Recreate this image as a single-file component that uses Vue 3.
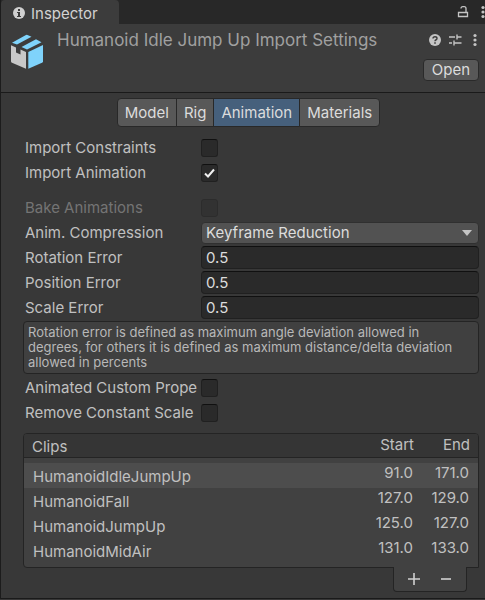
<script setup>
import { ref } from 'vue'

const tabs = ['Model', 'Rig', 'Animation', 'Materials']
const activeTab = ref('Animation')

const importConstraints = ref(false)
const importAnimation = ref(true)
const bakeAnimations = ref(false)
const compression = ref('Keyframe Reduction')
const errors = ref([
  { id: 'rotation-error', label: 'Rotation Error', value: '0.5' },
  { id: 'position-error', label: 'Position Error', value: '0.5' },
  { id: 'scale-error', label: 'Scale Error', value: '0.5' },
])
const animatedCustom = ref(false)
const removeScale = ref(false)

const clips = ref([
  { name: 'HumanoidIdleJumpUp', start: '91.0', end: '171.0' },
  { name: 'HumanoidFall', start: '127.0', end: '129.0' },
  { name: 'HumanoidJumpUp', start: '125.0', end: '127.0' },
  { name: 'HumanoidMidAir', start: '131.0', end: '133.0' },
])
const selected = ref(0)
</script>

<template>
  <main class="inspector">
    <div class="tabbar">
      <div class="window-tab">
        <svg class="info" viewBox="0 0 12 12" aria-hidden="true">
          <circle cx="6" cy="6" r="6" fill="#d0d0d0" />
          <path d="M5 2h2v2H5zM4 5h3v4h1v1H4V9h1V6H4z" fill="#3c3c3c" />
        </svg>
        <span>Inspector</span>
      </div>
      <div class="window-actions">
        <button class="icon-button" aria-label="Lock">
          <svg width="12" height="14" viewBox="0 0 12 14" fill="none" stroke="#c4c4c4">
            <path d="M1.500 7.500h9v4h-9zM9 7V3.500q0-1.800-1.800-1.800h-1.400Q4 1.700 4 3.500" stroke-width="1.300" />
          </svg>
        </button>
        <button class="icon-button" aria-label="Window menu">
          <svg width="4" height="14" viewBox="0 0 4 14" fill="#c4c4c4">
            <circle cx="2" cy="2.500" r="1.600" /><circle cx="2" cy="7" r="1.600" /><circle cx="2" cy="11.500" r="1.600" />
          </svg>
        </button>
      </div>
    </div>

    <header class="asset">
      <svg class="asset-icon" viewBox="0 0 34 36" aria-hidden="true">
        <path d="M1 11.200 6 13.500v5l4.500 2v-5L16 18v16.800L2 28.800Q1 28.300 1 27.300z" fill="#c8c8c8" />
        <path d="M18.300 18 33 11v16.300q0 1-1 1.500l-13.700 6z" fill="#7fd3fb" />
        <path d="M2 8.800 15.500 1.200q1-.6 2-.2L21.500 2.700 7 10.500zM11.500 13 26 5.200 31.500 8.300 17 15.500z" fill="#7fd3fb" />
      </svg>
      <h1>Humanoid Idle Jump Up Import Settings</h1>
      <div class="asset-side">
        <div class="asset-actions">
          <button class="icon-button" aria-label="Help">
            <svg width="12" height="12" viewBox="0 0 12 12">
              <circle cx="6" cy="6" r="6" fill="#c4c4c4" />
              <path d="M4 4.600Q4 2.800 6 2.800T8 4.500Q8 5.400 6.800 6 6 6.400 6 7.200" fill="none" stroke="#3c3c3c" stroke-width="1.400" />
              <path d="M5.200 8.300h1.600v1.500H5.200z" fill="#3c3c3c" />
            </svg>
          </button>
          <button class="icon-button" aria-label="Presets">
            <svg width="16" height="12" viewBox="0 0 16 12" fill="none" stroke="#c4c4c4" stroke-width="1.400">
              <path d="M0 3h6M8 3h4.500M8 .5v5M0 9h3M5 9h7.500M5 6.500v5" />
            </svg>
          </button>
          <button class="icon-button" aria-label="More">
            <svg width="4" height="14" viewBox="0 0 4 14" fill="#c4c4c4">
              <circle cx="2" cy="2.500" r="1.600" /><circle cx="2" cy="7" r="1.600" /><circle cx="2" cy="11.500" r="1.600" />
            </svg>
          </button>
        </div>
        <button class="open">Open</button>
      </div>
    </header>

    <section class="content">
      <nav class="tabs">
        <button
          v-for="tab in tabs"
          :key="tab"
          :class="{ active: tab === activeTab }"
          :aria-pressed="tab === activeTab"
          @click="activeTab = tab"
        >{{ tab }}</button>
      </nav>

      <div class="row">
        <label for="constraints">Import Constraints</label>
        <input id="constraints" v-model="importConstraints" type="checkbox" />
      </div>
      <div class="row">
        <label for="animation">Import Animation</label>
        <input id="animation" v-model="importAnimation" type="checkbox" />
      </div>
      <div class="row disabled">
        <label for="bake">Bake Animations</label>
        <input id="bake" v-model="bakeAnimations" type="checkbox" disabled />
      </div>
      <div class="row">
        <label for="compression">Anim. Compression</label>
        <div class="select">
          <select id="compression" v-model="compression">
            <option>Off</option>
            <option>Keyframe Reduction</option>
            <option>Optimal</option>
          </select>
          <svg class="arrow" viewBox="0 0 10 6" aria-hidden="true"><path d="M0 0h10L5 6z" fill="#c4c4c4" /></svg>
        </div>
      </div>
      <div v-for="field in errors" :key="field.id" class="row">
        <label :for="field.id">{{ field.label }}</label>
        <input :id="field.id" v-model="field.value" type="text" />
      </div>

      <p class="help">
        Rotation error is defined as maximum angle deviation allowed in degrees, for others it is defined as maximum distance/delta deviation allowed in percents
      </p>

      <div class="row">
        <label for="custom">Animated Custom Prope</label>
        <input id="custom" v-model="animatedCustom" type="checkbox" />
      </div>
      <div class="row">
        <label for="scale-curves">Remove Constant Scale</label>
        <input id="scale-curves" v-model="removeScale" type="checkbox" />
      </div>

      <div class="clips">
        <table>
          <thead>
            <tr><th>Clips</th><th class="num">Start</th><th class="num">End</th></tr>
          </thead>
          <tbody>
            <tr
              v-for="(clip, i) in clips"
              :key="clip.name"
              :class="{ selected: i === selected }"
              @click="selected = i"
            >
              <td>{{ clip.name }}</td>
              <td class="num">{{ clip.start }}</td>
              <td class="num">{{ clip.end }}</td>
            </tr>
          </tbody>
        </table>
      </div>
      <div class="clip-actions">
        <button class="icon-button" aria-label="Add clip">
          <svg width="12" height="12" viewBox="0 0 12 12"><path d="M6 0v12M0 6h12" stroke="#d0d0d0" stroke-width="1.600" /></svg>
        </button>
        <button class="icon-button" aria-label="Remove clip">
          <svg width="12" height="12" viewBox="0 0 12 12"><path d="M1 6h10" stroke="#d0d0d0" stroke-width="1.600" /></svg>
        </button>
      </div>
    </section>
  </main>
</template>

<style>
body {
  margin: 0;
  background: #383838;
}
</style>

<style scoped>
.inspector {
  box-sizing: border-box;
  border-left: 1px solid #1c1c1c;
  background: #383838;
  color: #c0c0c0;
  font: 15px/25px Inter, "Liberation Sans", sans-serif;
}
button, input, select {
  box-sizing: border-box;
  margin: 0;
  font: inherit;
  color: #dcdcdc;
}
.icon-button {
  display: flex;
  padding: 0;
  border: 0;
  background: none;
}
.tabbar {
  display: flex;
  justify-content: space-between;
  height: 24px;
  background: #282828;
}
.window-tab {
  display: flex;
  align-items: center;
  gap: 6px;
  padding: 2px 21px 0 12px;
  border-radius: 4px 4px 0 0;
  background: #3c3c3c;
  color: #d2d2d2;
}
.info {
  width: 12px;
  height: 12px;
}
.window-actions {
  display: flex;
  align-items: center;
  gap: 12px;
}
.asset {
  display: flex;
  gap: 13px;
  height: 68px;
  padding-left: 9px;
  border-bottom: 1px solid #1a1a1a;
  background: #3c3c3c;
}
.asset-icon {
  flex: none;
  width: 34px;
  height: 36px;
  margin-top: 10px;
}
h1 {
  flex: 1;
  min-width: 0;
  margin: 4px 0 0;
  font-size: 17px;
  font-weight: 400;
  white-space: nowrap;
  color: #a0a0a0;
}
.asset-side {
  display: flex;
  flex-direction: column;
  align-items: flex-end;
  gap: 12px;
  padding: 9px 6px 0 0;
}
.asset-actions {
  display: flex;
  align-items: center;
  gap: 8px;
  padding-right: 2px;
}
.open {
  height: 22px;
  padding: 0 8px;
  border: 1px solid #2a2a2a;
  border-radius: 4px;
  background: #585858;
  line-height: 20px;
}
.content {
  padding: 5px 6px 6px 22px;
  border-bottom: 1px solid #1a1a1a;
}
.tabs {
  display: flex;
  justify-content: center;
  margin: 0 0 8px;
  padding-right: 4px;
}
.tabs button {
  height: 29px;
  margin-left: -1px;
  padding: 0 7px;
  border: 1px solid #282828;
  background: #585858;
}
.tabs button:first-child {
  border-radius: 4px 0 0 4px;
}
.tabs button:last-child {
  border-radius: 0 4px 4px 0;
}
.tabs .active {
  background: #46607c;
}
.row {
  display: flex;
  align-items: center;
  height: 25px;
}
.row label {
  flex: none;
  box-sizing: border-box;
  width: 178px;
  padding-left: 2px;
  overflow: hidden;
  white-space: nowrap;
}
.disabled {
  margin-top: 10px;
}
.disabled label {
  color: #747474;
}
input[type="checkbox"] {
  appearance: none;
  width: 17px;
  height: 18px;
  border: 1px solid #202020;
  border-top-color: #101010;
  border-radius: 3px;
  background: #2a2a2a;
}
input[type="checkbox"]:checked {
  background: #2a2a2a url("data:image/svg+xml,%3Csvg xmlns='http://www.w3.org/2000/svg' viewBox='0 0 15 16'%3E%3Cpath d='M3 8.500l3 3 6-7' fill='none' stroke='%23f0f0f0' stroke-width='2'/%3E%3C/svg%3E") center / 15px 16px no-repeat;
}
.disabled input[type="checkbox"] {
  border-color: #2c2c2c;
  background: #323232;
}
input[type="text"] {
  flex: 1;
  min-width: 0;
  height: 23px;
  padding: 0 4px;
  border: 1px solid #202020;
  border-top-color: #101010;
  border-radius: 4px;
  background: #2a2a2a;
}
.select {
  position: relative;
  flex: 1;
  min-width: 0;
}
select {
  display: block;
  width: 100%;
  height: 22px;
  padding: 0 20px 0 4px;
  appearance: none;
  border: 1px solid #303030;
  border-radius: 4px;
  background: #525252;
  line-height: 20px;
}
.arrow {
  position: absolute;
  top: 8px;
  right: 7px;
  width: 10px;
  height: 6px;
  pointer-events: none;
}
.help {
  margin: 1px 0;
  padding: 3px 4px;
  border: 1px solid #242424;
  border-radius: 4px;
  background: #404040;
  color: #b8b8b8;
  font-size: 13px;
  line-height: 15px;
}
.clips {
  margin-top: 8px;
  padding-bottom: 4px;
  border: 1px solid #242424;
  border-radius: 4px 4px 0 4px;
  background: #414141;
  overflow: hidden;
}
table {
  width: 100%;
  border-collapse: separate;
  border-spacing: 0;
  line-height: 20px;
}
th {
  height: 20px;
  padding: 3px 8px 0;
  border-bottom: 1px solid #242424;
  background: #353535;
  font-weight: 400;
  text-align: left;
}
td {
  height: 20px;
  padding: 4px 9px 1px;
}
.num {
  width: 39px;
  text-align: right;
}
th.num {
  padding: 1px 8px 2px;
}
td.num {
  padding: 0 9px 5px 8px;
}
tbody::before {
  content: "";
  display: block;
  height: 5px;
}
.selected td {
  background: #4d4d4d;
}
.clip-actions {
  display: flex;
  align-items: center;
  gap: 20px;
  box-sizing: border-box;
  width: max-content;
  height: 25px;
  margin: -1px 12px 0 auto;
  padding: 0 14px;
  border: 1px solid #242424;
  border-top: 0;
  border-radius: 0 0 4px 4px;
  background: #414141;
}
</style>
